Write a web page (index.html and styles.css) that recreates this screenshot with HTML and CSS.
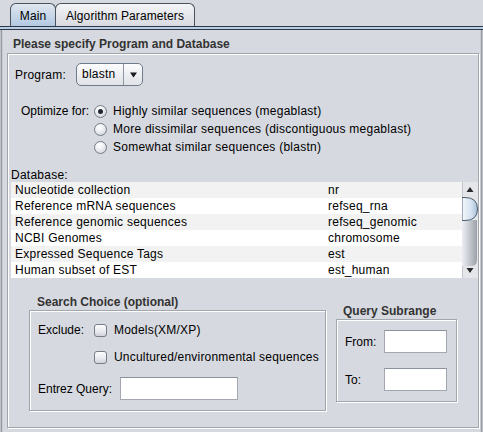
FILE: index.html
```html
<!DOCTYPE html>
<html>
<head>
<meta charset="utf-8">
<link rel="stylesheet" href="styles.css">
</head>
<body>
<div class="tabbar">
  <div class="tab tab-main">Main</div>
  <div class="tab tab-alg">Algorithm Parameters</div>
</div>
<div class="strip"></div>
<div class="pane">
  <div class="title">Please specify Program and Database</div>
  <div class="etched main-box">
    <div class="prog-row">
      <span class="lbl lbl-prog">Program:</span>
      <div class="combo">
        <span class="combo-text">blastn</span>
        <span class="combo-btn"><svg width="9" height="6" viewBox="0 0 9 6"><path d="M1 0.5 L8 0.5 L4.5 5.5 Z" fill="#1b1b1b"/></svg></span>
      </div>
    </div>
    <div class="opt-group">
      <div class="opt-row"><span class="lbl lbl-opt">Optimize for:</span><span class="radio sel"></span><span class="opt-text">Highly similar sequences (megablast)</span></div>
      <div class="opt-row indent"><span class="radio"></span><span class="opt-text">More dissimilar sequences (discontiguous megablast)</span></div>
      <div class="opt-row indent"><span class="radio"></span><span class="opt-text">Somewhat similar sequences (blastn)</span></div>
    </div>
    <div class="db-label">Database:</div>
    <div class="table-wrap">
      <div class="rows">
        <div class="row odd"><span class="c1">Nucleotide collection</span><span class="c2">nr</span></div>
        <div class="row"><span class="c1">Reference mRNA sequences</span><span class="c2">refseq_rna</span></div>
        <div class="row odd"><span class="c1">Reference genomic sequences</span><span class="c2">refseq_genomic</span></div>
        <div class="row"><span class="c1">NCBI Genomes</span><span class="c2">chromosome</span></div>
        <div class="row odd"><span class="c1">Expressed Sequence Tags</span><span class="c2">est</span></div>
        <div class="row"><span class="c1">Human subset of EST</span><span class="c2">est_human</span></div>
      </div>
      <div class="scrollbar">
        <svg width="16" height="96" viewBox="0 0 16 96">
          <defs>
            <linearGradient id="tb" x1="0" y1="0" x2="1" y2="0">
              <stop offset="0" stop-color="#f4f8fc"/>
              <stop offset="0.6" stop-color="#d4e2f0"/>
              <stop offset="1" stop-color="#a9bfd8"/>
            </linearGradient>
            <linearGradient id="tr" x1="0" y1="0" x2="1" y2="0">
              <stop offset="0" stop-color="#eceef1"/>
              <stop offset="0.5" stop-color="#c6cad0"/>
              <stop offset="1" stop-color="#9ba0a8"/>
            </linearGradient>
          </defs>
          <rect x="0" y="0" width="16" height="96" fill="#e4e6ea"/>
          <rect x="0" y="0" width="1" height="96" fill="#c3c7cd"/>
          <path d="M4.5 10 L11.5 10 L8 5 Z" fill="#2a2a2a"/>
          <path d="M0 38 L15 38 L15 78 Q15 84 9 84 L0 84 Z" fill="url(#tr)"/>
          <path d="M0 15.5 L3 15.5 Q15.5 15.5 15.5 27 Q15.5 38.5 3 38.5 L0 38.5 Z" fill="url(#tb)" stroke="#4e5d70" stroke-width="1"/>
          <path d="M4.5 86 L11.5 86 L8 91 Z" fill="#2a2a2a"/>
        </svg>
      </div>
    </div>
    <div class="bottom">
      <div class="search-col">
        <div class="sub-title">Search Choice (optional)</div>
        <div class="etched search-box">
          <div class="s-row first"><span class="lbl lbl-ex">Exclude:</span><span class="check"></span><span class="chk-text">Models(XM/XP)</span></div>
          <div class="s-row second"><span class="check"></span><span class="chk-text">Uncultured/environmental sequences</span></div>
          <div class="s-row third"><span class="lbl lbl-entrez">Entrez Query:</span><span class="field field-entrez"></span></div>
        </div>
      </div>
      <div class="range-col">
        <div class="sub-title">Query Subrange</div>
        <div class="etched range-box">
          <div class="r-row first"><span class="lbl lbl-from">From:</span><span class="field field-range"></span></div>
          <div class="r-row second"><span class="lbl lbl-from">To:</span><span class="field field-range"></span></div>
        </div>
      </div>
    </div>
  </div>
</div>
</body>
</html>
```
FILE: styles.css
```css
* { box-sizing: border-box; }
html, body { margin: 0; padding: 0; }
body {
  width: 483px;
  height: 432px;
  overflow: hidden;
  background: #d6d9df;
  font-family: "Liberation Sans", Arial, sans-serif;
  font-size: 12px;
  letter-spacing: 0.25px;
  color: #000;
}
.tabbar {
  height: 26px;
  padding: 3px 0 0 10px;
  display: flex;
  align-items: flex-end;
}
.tab {
  height: 23px;
  border: 1px solid #4a525c;
  border-bottom: none;
  border-radius: 6px 6px 0 0;
  display: flex;
  align-items: center;
  justify-content: center;
  padding-top: 1px;
  letter-spacing: 0.1px;
}
.tab-main {
  width: 46px;
  background: linear-gradient(#dfe6ee, #c6d6e8 55%, #b2c9e2);
}
.tab-alg {
  width: 140px;
  margin-left: -1px;
  background: linear-gradient(#f4f5f7, #e2e4e8 60%, #d8dbe0);
}
.strip {
  height: 4px;
  border-top: 1px solid #2d3642;
  border-bottom: 1px solid #2d3642;
  background: #b9cfe5;
}
.pane {
  height: 402px;
  background:
    linear-gradient(to right, #bfc3c9 0 1px, #959ba3 1px 2px, #c8ccd2 2px 3px, transparent 3px calc(100% - 3px), #c8ccd2 calc(100% - 3px) calc(100% - 2px), #959ba3 calc(100% - 2px) calc(100% - 1px), #bfc3c9 calc(100% - 1px)),
    #d6d9df;
  padding-top: 7px;
}
.title {
  height: 16px;
  line-height: 14px;
  padding-left: 13px;
  font-weight: bold;
  color: #333;
  letter-spacing: 0;
}
.etched {
  border: 1px solid #a2a7ae;
  box-shadow: inset 1px 1px 0 #fff, 1px 1px 0 #fff;
}
.main-box {
  margin-left: 7px;
  width: 472px;
  height: 375px;
}
.lbl { display: inline-block; line-height: 14px; letter-spacing: 0; }
.prog-row {
  margin-top: 9px;
  height: 23px;
  display: flex;
  align-items: center;
  padding-left: 7px;
}
.lbl-prog { width: 61px; letter-spacing: 0.2px; }
.combo {
  width: 67px;
  height: 23px;
  border: 1px solid #6f7b8a;
  border-radius: 5px;
  background: linear-gradient(#fdfdfe, #eceef1 55%, #dfe2e7);
  display: flex;
  align-items: stretch;
}
.combo-text {
  width: 47px;
  padding-left: 5px;
  line-height: 21px;
  border-right: 1px solid #8d96a2;
}
.combo-btn {
  flex: 1;
  display: flex;
  align-items: center;
  justify-content: center;
}
.opt-group { margin-top: 16px; }
.opt-row {
  height: 18px;
  display: flex;
  align-items: center;
  padding-left: 13px;
}
.opt-row.indent { padding-left: 86px; }
.lbl-opt { width: 73px; }
.radio {
  width: 13px;
  height: 13px;
  border-radius: 50%;
  border: 1px solid #767c85;
  background: radial-gradient(circle at 40% 30%, #ffffff, #eef0f3 40%, #c3c8cf);
  margin-right: 6px;
  position: relative;
  flex: none;
}
.radio.sel::after {
  content: "";
  position: absolute;
  left: 3px;
  top: 3px;
  width: 5px;
  height: 5px;
  border-radius: 50%;
  background: #1e2630;
}
.opt-text { line-height: 14px; }
.db-label {
  margin-top: 12px;
  height: 14px;
  line-height: 14px;
  padding-left: 3px;
}
.table-wrap {
  margin-left: 3px;
  width: 467px;
  height: 96px;
  display: flex;
}
.rows { width: 451px; }
.row {
  height: 16px;
  display: flex;
  align-items: center;
  background: #fff;
}
.row.odd { background: #f2f2f2; }
.c1 { width: 317px; padding-left: 4px; }
.scrollbar { width: 16px; height: 96px; }
.scrollbar svg { display: block; }
.bottom { display: flex; align-items: flex-start; }
.search-col { margin-left: 21px; margin-top: 16px; }
.range-col { margin-left: 10px; margin-top: 25px; }
.sub-title {
  height: 16px;
  line-height: 14px;
  padding-top: 1px;
  padding-left: 8px;
  font-weight: bold;
  color: #333;
  letter-spacing: 0;
}
.range-col .sub-title { padding-left: 7px; }
.search-box { width: 297px; height: 101px; }
.range-box { width: 121px; height: 83px; }
.s-row { display: flex; align-items: center; padding-left: 8px; }
.s-row.first { margin-top: 10px; height: 18px; }
.s-row.second { margin-top: 9px; height: 18px; padding-left: 64px; }
.s-row.third { margin-top: 11px; height: 23px; }
.lbl-ex { width: 56px; }
.lbl-entrez { width: 82px; }
.check {
  width: 13px;
  height: 13px;
  border: 1px solid #767c85;
  border-radius: 3px;
  background: linear-gradient(#fdfdfe, #e7e9ed 60%, #d0d4da);
  margin-right: 7px;
  flex: none;
}
.chk-text { line-height: 14px; letter-spacing: 0.2px; }
.field {
  display: block;
  height: 23px;
  background: #fff;
  border: 1px solid #a3a8b0;
  border-top-color: #8c929b;
}
.field-entrez { width: 118px; }
.r-row { display: flex; align-items: center; padding-left: 8px; height: 23px; }
.r-row.first { margin-top: 10px; }
.r-row.second { margin-top: 15px; }
.lbl-from { width: 39px; }
.field-range { width: 63px; }
```
